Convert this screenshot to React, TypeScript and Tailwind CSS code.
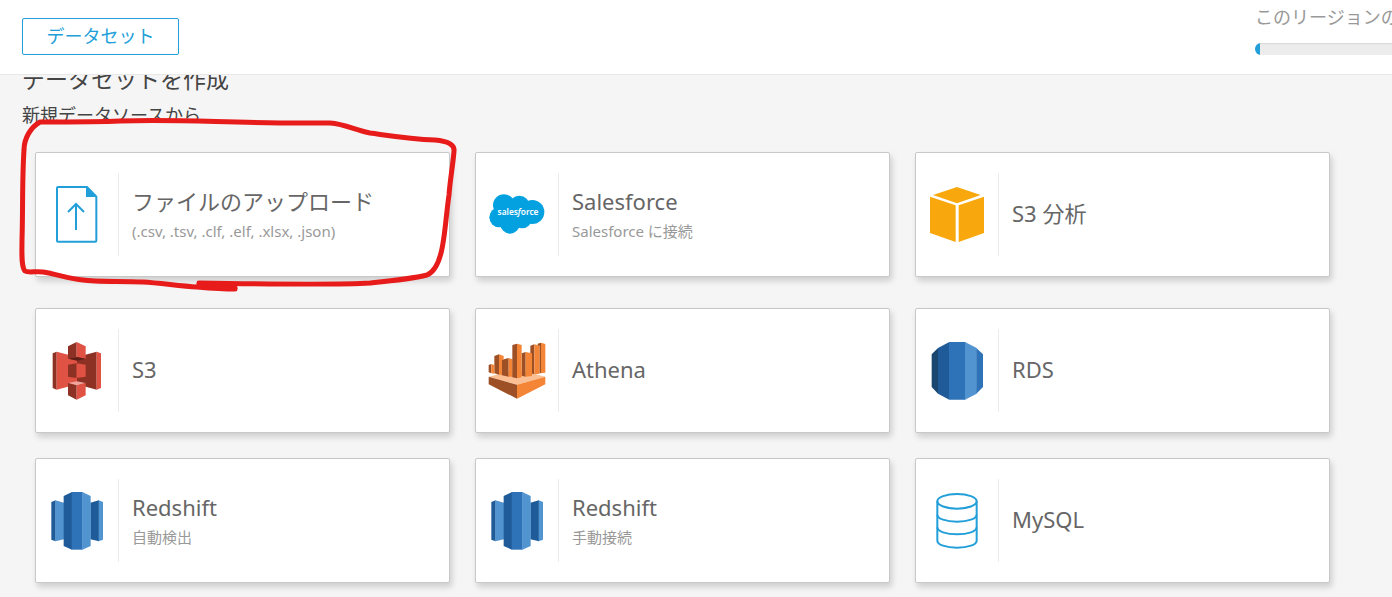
import type { ReactNode } from 'react';

function FileUploadIcon() {
  return (
    <svg viewBox="81 132 180 183" className="h-[61px] w-[60px]" aria-hidden="true">
      <path d="M199 141H114Q111 141 111 144V302Q111 305 114 305H226Q229 305 229 302V169" fill="none" stroke="#229fd9" strokeWidth="6" />
      <path d="M198 138H202L231 167V171H198Z" fill="#229fd9" />
      <path d="M168 270V194M144 216L168 192L192 216" fill="none" stroke="#229fd9" strokeWidth="6" />
    </svg>
  );
}

function SalesforceIcon() {
  return (
    <svg viewBox="51 117 180 183" className="h-[61px] w-[60px]" aria-hidden="true">
      <g fill="#04a1e0">
        <circle cx="102" cy="181" r="33" />
        <circle cx="148" cy="183" r="31" />
        <circle cx="187" cy="201" r="36" />
        <circle cx="88" cy="217" r="30" />
        <circle cx="120" cy="237" r="29" />
        <circle cx="157" cy="222" r="28" />
        <path d="M90 190H190V225H90Z" />
      </g>
      <text x="144" y="210" textAnchor="middle" fill="#fff" fontSize="25" fontWeight="600" fontFamily="'Noto Sans', sans-serif">
        sales<tspan fontStyle="italic">f</tspan>orce
      </text>
    </svg>
  );
}

function CubeIcon() {
  return (
    <svg viewBox="51 117 180 183" className="h-[61px] w-[60px]" fill="#f8a80d" aria-hidden="true">
      <path d="M141 126L212 150L141 175L69 150Z" />
      <path d="M60 155L137 181V291L60 264Z" />
      <path d="M222 155L146 181V291L222 264Z" />
    </svg>
  );
}

function S3Icon() {
  return (
    <svg viewBox="51 120 180 183" className="h-[61px] w-[60px]" aria-hidden="true">
      <path d="M68 160L80 155V269L68 264Z" fill="#8c3123" />
      <path d="M80 155L141 171V253L80 269Z" fill="#e05243" />
      <path d="M200 155L141 171V253L200 269Z" fill="#8c3123" />
      <path d="M200 155L213 160V264L200 269Z" fill="#e05243" />
      <path d="M114 139L140 126V171L114 176Z" fill="#8c3123" />
      <path d="M140 126L167 139V176L140 171Z" fill="#e05243" />
      <path d="M114 176L140 171L167 176L141 182Z" fill="#5e1f18" />
      <path d="M114 194L140 190V234L114 230Z" fill="#8c3123" />
      <path d="M140 190L167 194V230L140 234Z" fill="#e05243" />
      <path d="M114 249L140 244L167 249L140 257Z" fill="#efa59d" />
      <path d="M114 249L140 256V299L114 286Z" fill="#8c3123" />
      <path d="M140 256L167 249V286L140 299Z" fill="#e05243" />
    </svg>
  );
}

function AthenaIcon() {
  return (
    <svg viewBox="51 120 180 183" className="h-[61px] w-[60px]" aria-hidden="true">
      <path d="M57 230L141 208L226 230L141 254Z" fill="#fbbf93" />
      <path d="M56 230L141 254V296L56 253Z" fill="#9d5025" />
      <path d="M226 230L141 254V296L226 253Z" fill="#f58536" />
      <g fill="#9d5025">
        <path d="M56 195L64 192V220L56 217Z" />
        <path d="M73 168L87 163V224L73 220Z" />
        <path d="M96 179L116 174V230L96 226Z" />
        <path d="M155 160L167 156V230L155 227Z" />
        <path d="M181 137L193 133V223L181 220Z" />
      </g>
      <g fill="#f58536">
        <path d="M64 192L73 195V221L64 220Z" />
        <path d="M87 163L101 168V179L96 180V225L87 224Z" />
        <path d="M116 174L128 178V230L116 230Z" />
        <path d="M167 156L186 160V228L167 230Z" />
        <path d="M193 133L209 137V221L193 223Z" />
      </g>
      <path d="M203 131L213 128V219L209 220V138L203 136Z" fill="#9d5025" />
      <path d="M213 128L226 132V218L213 220Z" fill="#f58536" />
      <path d="M127 135L141 131V235L127 232Z" fill="#9d5025" />
      <path d="M141 131L155 135V232L141 235Z" fill="#f58536" />
    </svg>
  );
}

function RdsIcon() {
  return (
    <svg viewBox="51 120 180 183" className="h-[61px] w-[60px]" aria-hidden="true">
      <path d="M65 163L84 144V281L65 261Z" fill="#1a476f" />
      <path d="M84 144L118 126V299L84 281Z" fill="#205b99" />
      <path d="M117 126H166V299H117Z" fill="#2e73b8" />
      <path d="M165 126L200 144V281L165 299Z" fill="#5294cf" />
      <path d="M199 144L219 163V261L199 281Z" fill="#2e73b8" />
    </svg>
  );
}

function RedshiftIcon() {
  return (
    <svg viewBox="51 120 180 183" className="h-[61px] w-[60px]" aria-hidden="true">
      <path d="M64 156L77 151V274L64 269Z" fill="#205b99" />
      <path d="M76 151L102 158V268L76 274Z" fill="#5294cf" />
      <path d="M207 151L181 158V268L207 274Z" fill="#205b99" />
      <path d="M206 151L219 156V269L206 274Z" fill="#5294cf" />
      <path d="M101 138L126 126V299L101 288Z" fill="#205b99" />
      <path d="M125 126H158V299H125Z" fill="#2e73b8" />
      <path d="M157 126L182 138V288L157 299Z" fill="#5294cf" />
    </svg>
  );
}

function DatabaseIcon() {
  return (
    <svg viewBox="51 120 180 183" className="h-[61px] w-[60px]" fill="none" stroke="#229fd9" strokeWidth="6" aria-hidden="true">
      <ellipse cx="141" cy="154" rx="59" ry="22" />
      <path d="M82 154V272C82 284 108 293 141 293C174 293 200 284 200 272V154" />
      <path d="M82 194C82 206 108 215 141 215C174 215 200 206 200 194" />
      <path d="M82 232C82 244 108 253 141 253C174 253 200 244 200 232" />
    </svg>
  );
}

type Source = { title: string; detail?: string; icon: ReactNode };

const featured: Source[] = [
  { title: 'ファイルのアップロード', detail: '(.csv, .tsv, .clf, .elf, .xlsx, .json)', icon: <FileUploadIcon /> },
  { title: 'Salesforce', detail: 'Salesforce に接続', icon: <SalesforceIcon /> },
  { title: 'S3 分析', icon: <CubeIcon /> },
];

const services: Source[] = [
  { title: 'S3', icon: <S3Icon /> },
  { title: 'Athena', icon: <AthenaIcon /> },
  { title: 'RDS', icon: <RdsIcon /> },
  { title: 'Redshift', detail: '自動検出', icon: <RedshiftIcon /> },
  { title: 'Redshift', detail: '手動接続', icon: <RedshiftIcon /> },
  { title: 'MySQL', icon: <DatabaseIcon /> },
];

function SourceCard({ title, detail, icon }: Source) {
  return (
    <button
      type="button"
      className="flex h-[125px] items-center rounded-xs border border-[#c8c8c8] bg-white text-left shadow-[2px_4px_6px_rgba(0,0,0,0.16)]"
    >
      <span className="my-5 flex w-[83px] shrink-0 items-center justify-center self-stretch border-r border-[#ececec]">
        {icon}
      </span>
      <span className="flex min-w-0 flex-col pl-[13px]">
        <span className="pb-[3px] text-[22px] leading-[30px] text-[#666]">{title}</span>
        {detail && <span className="text-[15px] leading-6 text-[#999]">{detail}</span>}
      </span>
    </button>
  );
}

function SourceGrid({ sources }: { sources: Source[] }) {
  return (
    <div className="grid grid-cols-3 gap-[25px]">
      {sources.map((source, index) => (
        <SourceCard key={index} {...source} />
      ))}
    </div>
  );
}

export default function App() {
  return (
    <div className="relative min-h-screen overflow-hidden bg-[#f5f5f5] font-['Noto_Sans','Noto_Sans_CJK_JP',sans-serif]">
      <header className="relative z-10 flex h-[75px] items-start justify-between border-b border-[#e8e8e8] bg-white pl-[22px]">
        <button
          type="button"
          className="mt-[18px] h-[37px] w-[157px] rounded-xs border border-[#229fd9] pb-0.5 text-lg leading-7 text-[#229fd9]"
        >
          データセット
        </button>
        <div className="w-[137px] shrink-0 overflow-hidden pt-[3px]">
          <p id="capacity" className="text-lg leading-7 whitespace-nowrap text-[#999]">
            このリージョンの
          </p>
          <div
            role="progressbar"
            aria-labelledby="capacity"
            aria-valuenow={2}
            className="mt-3 h-3 overflow-hidden rounded-l-full bg-[#ececec] bg-linear-to-b from-[#dcdcdc] from-5% to-[#ececec] to-15%"
          >
            <div className="h-full w-[5px] bg-[#229fd9]" />
          </div>
        </div>
      </header>
      <main className="pb-[14px]">
        <div className="-mt-[10px] pl-[22px] text-[#444]">
          <h1 className="text-[23px] leading-7">データセットを作成</h1>
          <h2 className="mt-2 text-lg leading-7">新規データソースから</h2>
        </div>
        <div className="flex flex-col gap-[31px] pt-[23px] pr-[62px] pl-[35px]">
          <SourceGrid sources={featured} />
          <SourceGrid sources={services} />
        </div>
      </main>
      <svg className="pointer-events-none absolute top-0 left-0 z-20" width="470" height="300" viewBox="0 0 470 300" fill="none" stroke="#e81b1b" strokeWidth="5" strokeLinecap="round" strokeLinejoin="round" aria-hidden="true">
        <path d="M235 289C222 289 209 288 197 287C180 286 160 283 143 282C120 281 96 282 83 280C70 279 56 274 43 272C36 271 28 273 25 271C21 267 22 251 22 240C23 210 22 180 24 150C24 138 31 127 40 122C70 122 100 122 120 121C170 119 210 122 280 123H330C345 124 355 130 370 133C392 136 410 139 435 140C448 141 455 145 454 151C453 165 450 180 449 195C446 215 445 238 441 253C438 265 434 272 427 275C411 279 390 281 370 283C340 285 260 284 199 283" />
        <path d="M199 284L235 288" />
      </svg>
    </div>
  );
}
